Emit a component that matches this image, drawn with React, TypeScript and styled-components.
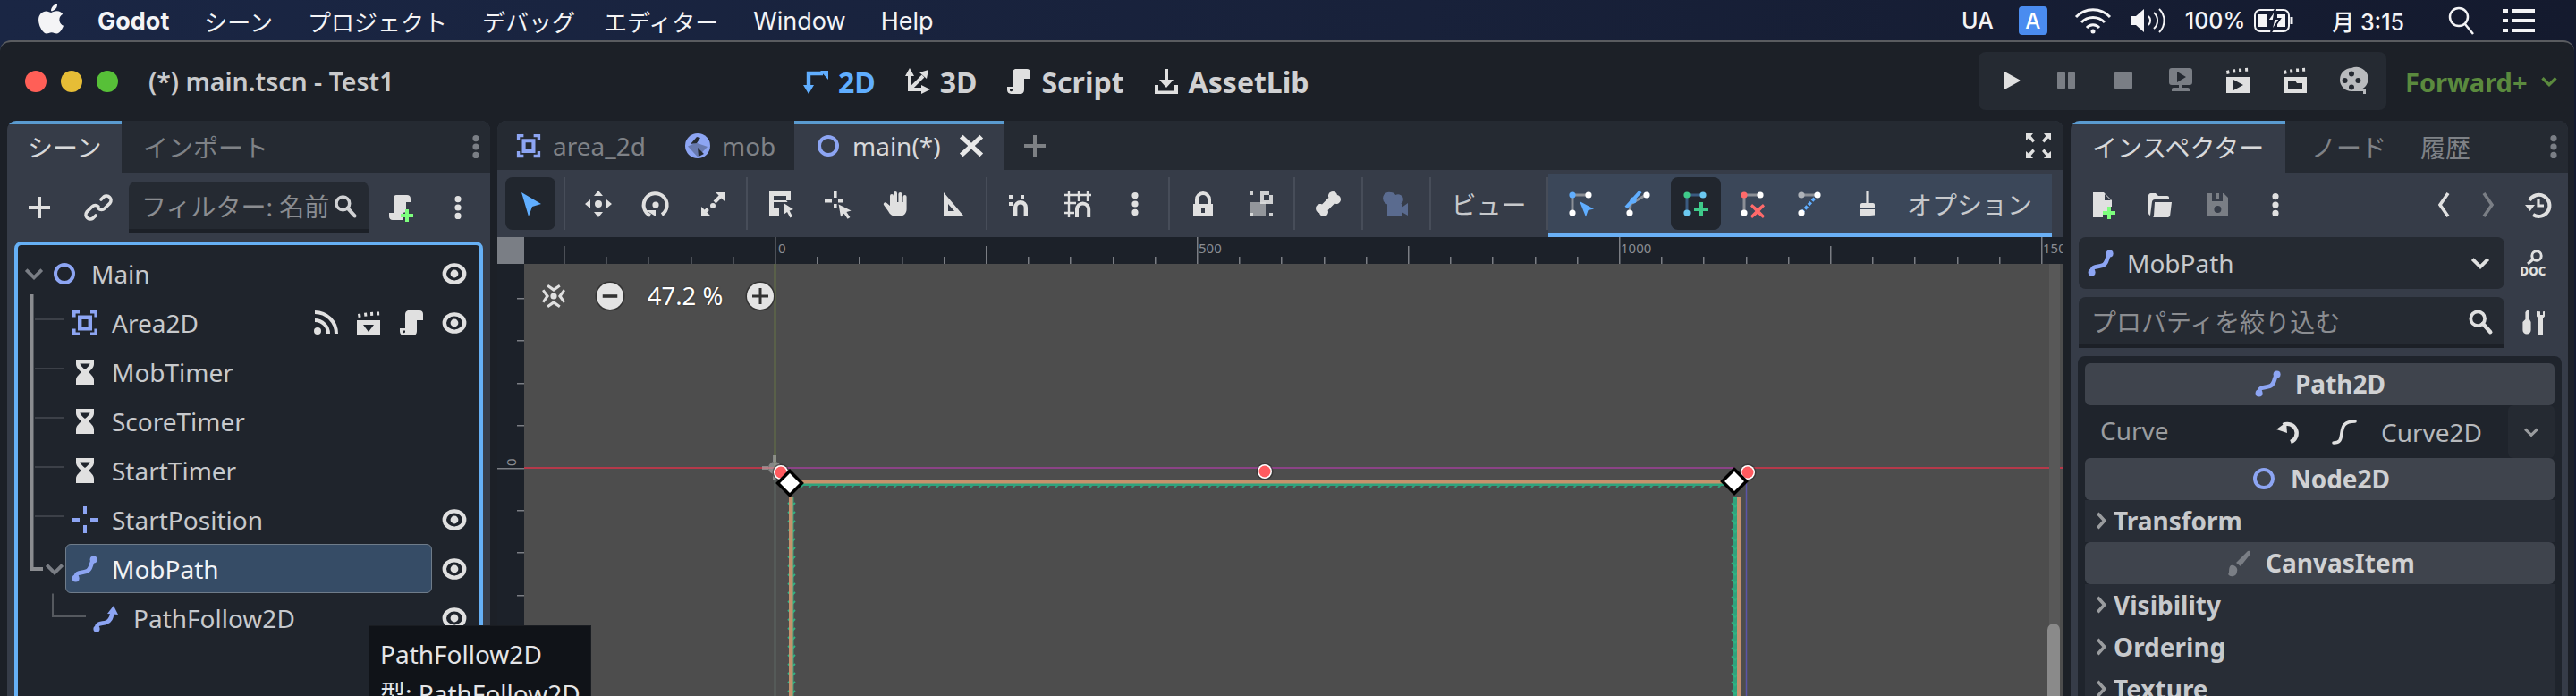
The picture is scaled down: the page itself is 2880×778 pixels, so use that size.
import React from 'react';
import styled, { createGlobalStyle } from 'styled-components';
import { FaApple } from 'react-icons/fa';

const SANS = `"Noto Sans", "Noto Sans CJK JP", sans-serif`;
const MAC = `Inter, "Noto Sans CJK JP", sans-serif`;

const GlobalStyle = createGlobalStyle`
  html, body { margin: 0; padding: 0; background: #151b30; }
  * { box-sizing: border-box; }
`;

const BLUE = '#8da5f3';
const DIM = '#7a7e85';
const GREEN = '#7dff7d';

const icons: Record<string, React.ReactNode> = {
  play: <path d="M5 3.500v9a.5.5 0 0 0 .8.4L14 8.400a.5.5 0 0 0 0-.8L5.800 3.100a.5.500 0 0 0-.8.4z" />,
  pause: <path d="M4 3h2.500a1 1 0 0 1 1 1v8a1 1 0 0 1-1 1H4a1 1 0 0 1-1-1V4a1 1 0 0 1 1-1zm6 0h2a1 1 0 0 1 1 1v8a1 1 0 0 1-1 1h-2a1 1 0 0 1-1-1V4a1 1 0 0 1 1-1z" />,
  stop: <rect x="3" y="3" width="10" height="10" rx="1" />,
  remote: <path d="M3 1h10a1.500 1.500 0 0 1 1.500 1.500V9A1.500 1.500 0 0 1 13 10.500H9v1.500h3a1 1 0 0 1 1 1V14H3v-1a1 1 0 0 1 1-1h3v-1.500H3A1.500 1.500 0 0 1 1.500 9V2.500A1.500 1.500 0 0 1 3 1zm3 2v6l5-3z" />,
  playScene: <path d="M1.500 2.500l1.500-.4.300 2-1.500.4zm3.500-.7l1.500-.2.200 2-1.500.2zm3.500-.5H10l.1 2H8.600zm3.500-.3l1.500-.1.1 2h-1.500zM1.500 6h13v9h-13zm4 1.500v6l5.500-3z" />,
  playCustom: <path d="M1.500 2.500l1.500-.4.300 2-1.500.4zm3.500-.7l1.500-.2.200 2-1.500.2zm3.500-.5H10l.1 2H8.600zm3.500-.3l1.500-.1.1 2h-1.500zM1.500 6h13v9h-13zm2.500 2v5h8V9.500H9L8 8z" />,
  reel: <path d="M7.500 1a6.500 6.500 0 1 0 0 13h6.500v1.500h1.500V13h-2.500a6.500 6.500 0 0 0-5.500-12zm0 1.800a1.500 1.500 0 1 1 0 3 1.500 1.500 0 0 1 0-3zM3.800 6.500a1.500 1.500 0 1 1 0 3 1.500 1.500 0 0 1 0-3zm7.400 0a1.500 1.500 0 1 1 0 3 1.500 1.500 0 0 1 0-3zm-3.700 3.700a1.500 1.500 0 1 1 0 3 1.500 1.500 0 0 1 0-3z" />,
  mode2d: (
    <>
      <path d="M4 11V3.500h8" fill="none" stroke="currentColor" strokeWidth="2.200" />
      <path d="M1 10h6l-3 5zM10.500 2h4.500v5z" />
    </>
  ),
  mode3d: (
    <>
      <path d="M3.500 4v8.500H11M3.500 12.500L11 5" fill="none" stroke="currentColor" strokeWidth="2" />
      <path d="M1 5l2.500-4.500L6 5zM10 10l5 2.500-5 2.500zM9 3l5-1.500-1 5z" />
    </>
  ),
  script: <path d="M6.500 1C5 1 4.500 2.200 4.500 3.500V11H1.500v1.800c0 1.300.9 2.200 2.200 2.200h5.100c1.400 0 2.200-1 2.200-2.400V6.500h3.500V3C14.500 1.800 13.700 1 12.500 1zM3 12.300h1.500v.8a.8.8 0 0 1-1.500 0z" />,
  asset: <path d="M7 1h2v6h3l-4 4.500L4 7h3zM1.500 10h2v3.200h9V10h2v5h-13z" />,
  node: <path d="M8 2a6 6 0 1 0 0 12A6 6 0 0 0 8 2zm0 2a4 4 0 1 1 0 8 4 4 0 0 1 0-8z" />,
  area: <path d="M1 1h4v1.800H2.800V4.800H1zM11 1h4v3.800h-1.800V2.800H11zM1 11.200h1.800v2H5V15H1zM13.200 11.200H15V15h-4v-1.800h2.200zM4 3.800h8v8.400H4zm2.200 2.200v4h3.600V6z" />,
  mob: (
    <>
      <path d="M8 1a7 7 0 1 0 0 14A7 7 0 0 0 8 1z" />
      <path d="M2.500 8.200L7 6.300 13.500 8.500 8 14.300z" fill="#252a32" opacity=".35" />
      <path d="M7.500 3L4 7l3.500-.5 2-3z M8 9l3.500 3.500L8.500 14z" fill="#252a32" />
    </>
  ),
  close: <path d="M3 1.500l5 4.700 5-4.700 2 2L10 8l5 4.500-2 2-5-4.700-5 4.700-2-2L6 8 1 3.500z" />,
  plus: <path d="M7 2h2v5h5v2H9v5H7V9H2V7h5z" />,
  dots: <path d="M8 1.500a1.800 1.800 0 1 1 0 3.600 1.800 1.800 0 0 1 0-3.600zm0 4.700a1.800 1.800 0 1 1 0 3.600 1.800 1.800 0 0 1 0-3.600zm0 4.700a1.800 1.800 0 1 1 0 3.600 1.800 1.800 0 0 1 0-3.600z" />,
  link: <path d="M9.500 3.500L11 2a2.500 2.500 0 0 1 3.500 3.500l-3 3a2.500 2.500 0 0 1-3.500 0M6.500 12.500L5 14a2.500 2.500 0 0 1-3.500-3.500l3-3a2.500 2.500 0 0 1 3.500 0" fill="none" stroke="currentColor" strokeWidth="1.800" strokeLinecap="round" />,
  search: (
    <>
      <circle cx="6.500" cy="6.500" r="4.200" fill="none" stroke="currentColor" strokeWidth="2" />
      <path d="M9.500 9.500L14 14.500" fill="none" stroke="currentColor" strokeWidth="2.400" strokeLinecap="round" />
    </>
  ),
  addScript: (
    <>
      <path d="M5.500 1C4.500 1 4 2 4 3v8H1.500v2c0 1.200.9 2 2 2H9v-4l2-.5V5h2.500V3c0-1.200-.8-2-2-2z" />
      <path d="M10.500 9h2v2.500H15v2h-2.500V16h-2v-2.500H8v-2h2.500z" fill={GREEN} />
    </>
  ),
  eye: (
    <>
      <ellipse cx="8" cy="8" rx="5.600" ry="4.800" fill="none" stroke="currentColor" strokeWidth="2.200" />
      <circle cx="8" cy="8" r="2.200" />
    </>
  ),
  signal: (
    <>
      <circle cx="3.500" cy="12.500" r="2" />
      <path d="M2 6.500a7.500 7.500 0 0 1 7.500 7.500M2 2a12 12 0 0 1 12 12" fill="none" stroke="currentColor" strokeWidth="2" />
    </>
  ),
  group: <path d="M2 3l1.500-.3.300 2-1.500.3zm3.500-.6L7 2.200l.2 2-1.500.2zm3.500-.4l1.500-.1.100 2-1.500.1zm3.500-.2h1.500l.1 2h-1.500zM1.500 6.500h13V15h-13zM5 9l3 4 3-4z" />,
  timer: <path d="M3 1h10v2.500c0 1.800-1.500 3.100-3 4.500 1.500 1.400 3 2.700 3 4.500V15H3v-2.500C3 10.700 4.500 9.400 6 8 4.500 6.600 3 5.300 3 3.500zm2.200 2.200c.3 1 1.500 2.200 2.800 3.300 1.300-1.100 2.500-2.300 2.800-3.300z" />,
  marker: <path d="M7 .5h2V5H7zM7 11h2v4.500H7zM.5 7H5v2H.5zM11 7h4.500v2H11z" />,
  path: (
    <>
      <path d="M2.800 13.200C2.800 9.200 6 10.400 8.700 9.400 11.800 8.300 10.800 5.500 12.700 2.800" fill="none" stroke="currentColor" strokeWidth="2.400" strokeLinecap="round" />
      <circle cx="2.800" cy="13.200" r="2" />
      <circle cx="12.800" cy="2.800" r="2" />
    </>
  ),
  pathFollow: (
    <>
      <path d="M2.500 14C2.500 10.200 5.500 11.300 8 10.300 10.600 9.300 10.800 7 11.400 4.800" fill="none" stroke="currentColor" strokeWidth="2.300" strokeLinecap="round" />
      <circle cx="2.500" cy="14" r="1.800" />
      <path d="M8.500 5.500L12 1l2.500 5z" />
    </>
  ),
  select: <path d="M3 1.500L14 8l-5 1.500L7 15z" />,
  move: <path d="M8 .5L10.500 3.500h-5zM8 15.500l-2.500-3h5zM.5 8l3-2.500v5zM15.500 8l-3-2.500v5zM8 6a2 2 0 1 1 0 4 2 2 0 0 1 0-4z" />,
  rotate: (
    <>
      <path d="M5 14.500A6.500 6.500 0 1 1 11.500 14" fill="none" stroke="currentColor" strokeWidth="2" />
      <path d="M2.500 11.500h5.500V15z" />
      <circle cx="8" cy="8.500" r="1.800" />
    </>
  ),
  scale: <path d="M9.500 1.500h5v5l-1.800-1.800-3 3-1.400-1.400 3-3zM1.500 9.500l1.800 1.800 1.200-1.200 1.400 1.400-1.200 1.200 1.800 1.800h-5zM8 7.500a1.500 1.500 0 1 1 0 3 1.500 1.500 0 0 1 0-3z" />,
  listSelect: <path d="M1.500 1h12v5H11V3.500H4V6h7l.8 1H4v3h3v5H1.500zm8 6.500L15 11l-2.200.7L14.500 15l-1.300.7-1.700-3.200L9.500 14z" />,
  pivot: <path d="M5.500.5h1.800v4H5.500zM.5 5.500h4v1.800h-4zM8 5.500h2.500v1.800H8zM5.500 8h1.800v2.500H5.500zm2.800.2l7 3.500-2.600.8 2 3-1.400.9-2-3-1.800 1.800z" />,
  pan: <path d="M8 1a1 1 0 0 1 1 1v5h.7V2.500a1 1 0 0 1 2 0V7h.6V4a1 1 0 0 1 2 0v7c0 2.500-2 4-4.300 4H8.500C6.500 15 5 14 4 12L1.500 8.500c-.5-1 .8-2 1.700-1L5 9V3.500a1 1 0 0 1 2 0V2a1 1 0 0 1 1-1z" />,
  ruler: <path d="M3 1.500L14 14.500H3zM5.500 8v4h3.500z" />,
  snap: <path d="M1.500 3h2v2h-2zM1.500 7h2v2h-2zM8 3h2v2H8zM4 15V10a4 4 0 0 1 8 0v5h-2.200V10a1.800 1.800 0 0 0-3.600 0v5z" />,
  grid: (
    <>
      <path d="M3 .5v15M8.500 .5v6M13.500 .5v6M.5 3h15M.5 7.500h6.500M.5 13h5.500" fill="none" stroke="currentColor" strokeWidth="1.200" />
      <path d="M7.500 15.500V11a3.300 3.300 0 0 1 6.600 0v4.500" fill="none" stroke="currentColor" strokeWidth="2" />
    </>
  ),
  lock: <path d="M8 1a4.500 4.500 0 0 0-4.500 4.500V8H2.500v7h11V8h-1V5.500A4.500 4.500 0 0 0 8 1zm0 2a2.500 2.500 0 0 1 2.500 2.500V8h-5V5.500A2.500 2.500 0 0 1 8 3zM7 10h2v3H7z" />,
  groupSel: (
    <>
      <path d="M2 1h2v2H2zM13 1h2v2h-2zM2 13h2v2H2zM13 13h2v2h-2zM8 1h7v7H8v-1zm2 2v3h3V3z" opacity=".9" />
      <path d="M2 7h9v8H2z" opacity=".55" />
    </>
  ),
  bone: <path d="M10.500 1c1.500 0 2.300 1 2.500 2 1 .2 2 1 2 2.500 0 1.800-1.900 3-3.500 2.300L7.800 11.500c.7 1.600-.5 3.500-2.300 3.500-1.500 0-2.300-1-2.500-2-1-.2-2-1-2-2.500 0-1.800 1.900-3 3.500-2.300L8.200 4.500C7.500 2.900 8.700 1 10.500 1z" />,
  camera: <path d="M5 1.500a3 3 0 0 1 2.600 1.500A2.800 2.800 0 1 1 10.500 8H11v2l3.500-2.500v7L11 12.500V15H3V8.200A3.300 3.300 0 0 1 5 1.500z" />,
  pathSelect: (
    <>
      <path d="M3 3h9M3 3v10" fill="none" stroke="#8b8f96" strokeWidth="1.500" />
      <circle cx="3" cy="3" r="1.800" fill="#60aeff" />
      <circle cx="12" cy="3" r="1.800" fill="#fff" />
      <circle cx="3" cy="13" r="1.800" fill="#fff" />
      <path d="M7 6.500l8 4.300-3.200.7-1.300 3.800z" fill="#60aeff" />
    </>
  ),
  pathCurve: (
    <>
      <path d="M3 13L3.500 8 12 3" fill="none" stroke="#8b8f96" strokeWidth="1.500" />
      <path d="M1 10L9 1" fill="none" stroke="#60aeff" strokeWidth="2" />
      <circle cx="5" cy="6" r="1.800" fill="#60aeff" />
      <circle cx="12.500" cy="3" r="1.800" fill="#fff" />
      <circle cx="3" cy="13" r="1.800" fill="#fff" />
    </>
  ),
  pathAdd: (
    <>
      <path d="M3 3h9M3 3v10" fill="none" stroke="#3a5a80" strokeWidth="1.500" />
      <circle cx="3" cy="3" r="1.800" fill="#3fca8a" />
      <circle cx="12" cy="3" r="1.800" fill="#6bc8f0" />
      <circle cx="3" cy="13" r="1.800" fill="#6bc8f0" />
      <path d="M10 7h2v3h3v2h-3v3h-2v-3H7v-2h3z" fill="#3fca8a" />
    </>
  ),
  pathDelete: (
    <>
      <path d="M3 3h9M3 3v10" fill="none" stroke="#8b8f96" strokeWidth="1.500" />
      <circle cx="3" cy="3" r="1.800" fill="#ff6a6a" />
      <circle cx="12" cy="3" r="1.800" fill="#fff" />
      <circle cx="3" cy="13" r="1.800" fill="#fff" />
      <path d="M7.500 8l3 2.500L13.500 8l1 1.200-2.700 2.800 2.700 2.800-1 1.200-3-2.500-3 2.500-1-1.200 2.700-2.800-2.700-2.800z" fill="#ff6a6a" />
    </>
  ),
  pathClose: (
    <>
      <path d="M3 3h9" fill="none" stroke="#8b8f96" strokeWidth="1.500" />
      <path d="M3 13L12 3" fill="none" stroke="#60aeff" strokeWidth="1.800" strokeDasharray="2 1" />
      <circle cx="3" cy="3" r="1.800" fill="#aeb2b8" />
      <circle cx="12" cy="3" r="1.800" fill="#fff" />
      <circle cx="3" cy="13" r="1.800" fill="#fff" />
    </>
  ),
  broom: <path d="M7.200 1h1.600v6.500H11c.6 0 1 .4 1 1V10H4V8.500c0-.6.4-1 1-1h2.200zM4 11h8v3.300L4 15z" />,
  fullscreen: <path d="M1 1h4L3.800 2.500 6 5 4.800 6.200 2.500 3.800 1 5zM15 1v4l-1.500-1.200-2.300 2.400L10 5l2.200-2.500L11 1zM1 15v-4l1.500 1.200 2.300-2.400L6 11l-2.200 2.500L5 15zM15 15h-4l1.200-1.500L10 11l1.200-1.200 2.300 2.400L15 11z" />,
  newFile: (
    <>
      <path d="M2.500 1h6L13 5.500V9h-2.500v2.500H8V15H2.500zM9 2v3.500h3.500z" />
      <path d="M10.500 9h2v2.500H15v2h-2.500V16h-2v-2.500H8v-2h2.500z" fill={GREEN} />
    </>
  ),
  folder: <path d="M2 3c0-.8.500-1.500 1.300-1.500H6L7.500 3h5c.6 0 1 .4 1 1v1H5.500c-.8 0-1.300.5-1.500 1.200L3 14c-.6-.2-1-.8-1-1.500zM5.500 6.500H15l-.9 7.300c-.1.700-.6 1.200-1.300 1.200H4.500c.3-.2.500-.6.500-1z" />,
  save: <path d="M2.500 1.500h9L14 4v10.500H2.500zM5 1.500V6h6V1.500H9V5H7.500V1.500zM8.200 8.500a2 2 0 1 0 0 4 2 2 0 0 0 0-4z" />,
  back: <path d="M10 1.500L5.500 8l4.500 6.500" fill="none" stroke="currentColor" strokeWidth="1.800" />,
  forward: <path d="M6 1.500L10.500 8 6 14.500" fill="none" stroke="currentColor" strokeWidth="1.800" />,
  history: (
    <>
      <path d="M3.500 5.500A6 6 0 1 1 5.500 13.500" fill="none" stroke="currentColor" strokeWidth="2" />
      <path d="M1 8h5.500l-2.700 3.500z" />
      <path d="M8.500 4.500V8.500h3" fill="none" stroke="currentColor" strokeWidth="1.600" />
    </>
  ),
  chevron: <path d="M3 5.500l5 5 5-5" fill="none" stroke="currentColor" strokeWidth="2.200" />,
  arrowRight: <path d="M5.500 2.500l5 5.500-5 5.500" fill="none" stroke="currentColor" strokeWidth="2.400" />,
  tools: (
    <>
      <path d="M4 1h1.500v5l.8 1.500V12a2.300 2.300 0 0 1-4.600 0V7.500L3.200 6V2z" />
      <path d="M9.500 1.500v2.800l1 1.200v9.500H13V5.500l1-1.200V1.500l-1 .1V3.500h-1.500V1.600z" />
    </>
  ),
  revert: (
    <>
      <path d="M4.800 4A5.200 5.200 0 1 1 9 13.500" fill="none" stroke="currentColor" strokeWidth="2.200" />
      <path d="M1 6.500L6.500 2.500 7 8.500z" />
    </>
  ),
  curve: <path d="M2 14c3.500 0 4-1.500 4.500-5.500S8 2 14 2" fill="none" stroke="currentColor" strokeWidth="1.800" strokeLinecap="round" />,
  brush: <path d="M14 1.500c.7.500.7 1.300.2 2L9 10 6.500 8l6-6c.5-.6 1-.9 1.500-.5zM3.500 9.500a2.800 2.800 0 0 1 3.500 3.500A2.800 2.800 0 0 1 2 14.500c1-.8 0-3.500 1.500-5z" />,
  centerView: <path d="M8 6.200a1.800 1.800 0 1 1 0 3.600 1.800 1.800 0 0 1 0-3.600zM5 1.500l3 2 3-2 .8 1.200L8 5.500 4.200 2.700zM5 14.500l3-2 3 2 .8-1.200L8 10.500l-3.800 2.800zM1.500 5l2 3-2 3 1.200.8L5.500 8 2.700 4.200zM14.500 5l-2 3 2 3-1.200.8L10.500 8l2.800-3.800z" />,
  minus: <path d="M2.500 6.800h11v2.400h-11z" />,
};

const IconSvg = styled.svg<{ $s: number; $c: string }>`
  width: ${p => p.$s}px;
  height: ${p => p.$s}px;
  flex: none;
  display: block;
  color: ${p => p.$c};
  fill: currentColor;
  fill-rule: evenodd;
  overflow: visible;
`;

const Ic = ({ n, s = 32, c = '#e0e0e0' }: { n: string; s?: number; c?: string }) => (
  <IconSvg viewBox="0 0 16 16" $s={s} $c={c}>
    {icons[n]}
  </IconSvg>
);

const Page = styled.div`
  width: 2880px;
  height: 778px;
  overflow: hidden;
  display: flex;
  flex-direction: column;
  background: linear-gradient(90deg, #1a2644 0%, #18213a 55%, #141a2e 100%);
  position: relative;
`;

/* mac menu bar */
const MenuBar = styled.div`
  height: 45px;
  flex: none;
  display: flex;
  align-items: center;
  padding: 1px 46px 0 38px;
  font: 400 26px ${MAC};
  color: #f4f4f6;
  white-space: nowrap;
`;

const AppleSlot = styled.div`
  font-size: 38px;
  line-height: 0;
  margin-right: 33px;
  margin-top: -5px;
`;

const MenuItem = styled.span<{ $bold?: boolean; $latin?: boolean; $mr?: number }>`
  margin-right: ${p => p.$mr ?? 39}px;
  font-weight: ${p => (p.$bold ? 700 : 400)};
  font-size: ${p => (p.$bold || p.$latin ? 27 : 26)}px;
`;

const StatusArea = styled.div`
  margin-left: auto;
  display: flex;
  align-items: center;
  font-size: 25px;
  font-weight: 500;
`;

const StatusItem = styled.span<{ $gap: number }>`
  margin-left: ${p => p.$gap}px;
  display: flex;
  align-items: center;
`;

const InputBadge = styled.span`
  width: 32px;
  height: 32px;
  margin-left: 28px;
  border-radius: 4px;
  background: #4a8cf0;
  color: #fff;
  display: flex;
  align-items: center;
  justify-content: center;
  font-size: 24px;
`;

/* editor window */
const EditorWindow = styled.div`
  flex: 1;
  width: 2878px;
  min-height: 0;
  display: flex;
  flex-direction: column;
  background: #1c2027;
  border-top: 2px solid #5a5c60;
  border-radius: 12px 12px 0 0;
  font-family: ${SANS};
  font-size: 28px;
  color: #d8d9db;
`;

const TitleBar = styled.div`
  height: 88px;
  flex: none;
  display: flex;
  align-items: center;
`;

const TitleLeft = styled.div`
  width: 896px;
  flex: none;
  display: flex;
  align-items: center;
  padding-left: 28px;
  gap: 16px;
`;

const Light = styled.span<{ $c: string }>`
  width: 24px;
  height: 24px;
  border-radius: 50%;
  background: ${p => p.$c};
`;

const WindowTitle = styled.span`
  margin-left: 18px;
  font-weight: 600;
  font-size: 28.500px;
  color: #c9cacc;
`;

const ModeTabs = styled.div`
  width: 1316px;
  flex: none;
  display: flex;
  align-items: center;
  gap: 31px;
`;

const ModeTab = styled.span<{ $on?: boolean }>`
  display: flex;
  align-items: center;
  gap: 9px;
  font-weight: 700;
  font-size: 32px;
  color: ${p => (p.$on ? '#60aeff' : '#d0d1d3')};
`;

const RunBar = styled.div`
  width: 456px;
  height: 65px;
  flex: none;
  display: flex;
  align-items: center;
  padding-left: 18px;
  gap: 32px;
  background: #252a32;
  border-radius: 8px;
  margin-top: -2px;
`;

const Renderer = styled.div`
  display: flex;
  align-items: center;
  gap: 12px;
  margin-left: 21px;
  font-weight: 700;
  font-size: 29px;
  color: #5b8a3e;
`;

const Body = styled.div`
  flex: 1;
  min-height: 0;
  display: flex;
  padding-left: 8px;
  gap: 8px;
  overflow: hidden;
`;

const Panel = styled.div<{ $w: number }>`
  width: ${p => p.$w}px;
  flex: none;
  display: flex;
  flex-direction: column;
  background: #363c48;
  border-radius: 10px 10px 0 0;
  overflow: hidden;
`;

const TabRow = styled.div<{ $h: number }>`
  height: ${p => p.$h}px;
  flex: none;
  display: flex;
  align-items: stretch;
  background: #252a32;
`;

const Tab = styled.div<{ $on?: boolean; $w: number; $pad: number; $gap?: number }>`
  width: ${p => p.$w}px;
  flex: none;
  display: flex;
  align-items: center;
  gap: ${p => p.$gap ?? 11}px;
  padding-left: ${p => p.$pad}px;
  padding-bottom: 4px;
  background: ${p => (p.$on ? '#363c48' : 'transparent')};
  border-top: 4px solid ${p => (p.$on ? '#5a9bd0' : 'transparent')};
  color: ${p => (p.$on ? '#d8d9db' : '#7f8287')};
`;

const TabDots = styled.div`
  margin-left: auto;
  align-self: center;
`;

/* scene dock */
const DockBar = styled.div`
  height: 77px;
  flex: none;
  display: flex;
  align-items: center;
  padding-left: 20px;
`;

const DockBtn = styled.div<{ $ml?: number }>`
  margin-left: ${p => p.$ml ?? 0}px;
  flex: none;
`;

const FilterBox = styled.div<{ $w: number }>`
  width: ${p => p.$w}px;
  height: 57px;
  flex: none;
  display: flex;
  align-items: center;
  justify-content: space-between;
  padding: 0 12px 0 14px;
  background: #252a32;
  border-bottom: 4px solid #1c2027;
  border-radius: 8px 8px 0 0;
  color: #8b8d91;
  white-space: nowrap;
`;

const TreeBox = styled.div`
  flex: 1;
  margin: 0 8px -12px;
  padding-top: 4px;
  background: #1f242c;
  border: 4px solid #66b0f5;
  border-radius: 8px 8px 0 0;
  position: relative;
`;

const TreeRow = styled.div<{ $pad: number }>`
  height: 55px;
  display: flex;
  align-items: center;
  padding: 0 12px 0 ${p => p.$pad}px;
  position: relative;
`;

const ArrowSlot = styled.div`
  width: 25px;
  flex: none;
  display: flex;
  justify-content: center;
`;

const NodeLabel = styled.div<{ $sel?: boolean }>`
  height: 55px;
  width: ${p => (p.$sel ? '410px' : 'auto')};
  display: flex;
  align-items: center;
  gap: 14px;
  padding-left: 5px;
  background: ${p => (p.$sel ? '#364c66' : 'transparent')};
  border: 1px solid ${p => (p.$sel ? '#6f7c8a' : 'transparent')};
  border-radius: 6px;
  color: ${p => (p.$sel ? '#f2f3f5' : '#c7c9cc')};
`;

const RowIcons = styled.div`
  margin-left: auto;
  display: flex;
  gap: 16px;
`;

const TreeGuide = styled.svg`
  position: absolute;
  left: 0;
  top: 0;
  width: 100%;
  height: 100%;
  pointer-events: none;
`;

const Tooltip = styled.div`
  position: absolute;
  left: 412px;
  top: 699px;
  width: 249px;
  height: 100px;
  padding: 9px 12px;
  background: #101318;
  border: 1px solid #1a1d22;
  color: #e4e5e7;
  font: 400 28px/44px ${SANS};
  white-space: nowrap;
  z-index: 5;
`;

/* 2D editor */
const FileAdd = styled.div`
  margin-left: 18px;
  align-self: center;
`;

const Fullscreen = styled.div`
  margin-left: auto;
  margin-right: 12px;
  align-self: center;
`;

const Toolbar = styled.div`
  height: 75px;
  flex: none;
  display: flex;
  align-items: center;
  padding-left: 9px;
  background: #363c48;
`;

const ToolGroup = styled.div`
  display: flex;
  gap: 8px;
`;

const ToolBtn = styled.div<{ $on?: boolean }>`
  width: 56px;
  height: 59px;
  display: flex;
  align-items: center;
  justify-content: center;
  border-radius: 8px;
  background: ${p => (p.$on ? '#21262e' : 'transparent')};
`;

const TextTool = styled.div<{ $w: number }>`
  width: ${p => p.$w}px;
  height: 59px;
  display: flex;
  align-items: center;
  justify-content: center;
  color: #c7c9cc;
`;

const Sep = styled.div`
  width: 2px;
  height: 59px;
  margin: 0 9px;
  flex: none;
  background: #474d59;
`;

const PathTools = styled.div`
  align-self: flex-end;
  height: 71px;
  width: 563px;
  margin-left: -9px;
  padding: 0 0 0 9px;
  display: flex;
  align-items: center;
  gap: 8px;
  background: #3b4759;
  border-bottom: 4px solid #6ab0f5;
`;

const RulerRow = styled.div`
  height: 30px;
  flex: none;
  display: flex;
  background: #1c2129;
`;

const RulerCorner = styled.div`
  width: 30px;
  flex: none;
  background: #7a7e85;
`;

const Ruler = styled.svg`
  display: block;
  flex: 1;
  min-width: 0;
`;

const CanvasRow = styled.div`
  flex: 1;
  min-height: 0;
  display: flex;
`;

const SideRuler = styled.svg`
  width: 30px;
  flex: none;
  display: block;
  background: #1c2129;
`;

const Viewport = styled.div`
  flex: 1;
  position: relative;
  background: #4d4d4d;
  overflow: hidden;
`;

const CanvasArt = styled.svg`
  position: absolute;
  left: 0;
  top: 0;
  width: 1721px;
  height: 483px;
`;

const ZoomOverlay = styled.div`
  position: absolute;
  left: 17px;
  top: 17px;
  display: flex;
  align-items: center;
  color: #fff;
  font-size: 27.500px;
  text-shadow: 0 0 2px #222;
`;

const ZoomBtn = styled.div<{ $ml?: number }>`
  width: 30px;
  height: 30px;
  margin-left: ${p => p.$ml ?? 0}px;
  border-radius: 50%;
  background: #e4e4e4;
  box-shadow: 0 0 0 1.500px #333;
  display: flex;
  align-items: center;
  justify-content: center;
`;

const ZoomValue = styled.span`
  width: 138px;
  text-align: center;
`;

const ScrollTrack = styled.div`
  position: absolute;
  right: 4px;
  top: 0;
  bottom: 0;
  width: 12px;
  background: #585858;
`;

const ScrollThumb = styled.div`
  position: absolute;
  right: 4px;
  top: 402px;
  bottom: -20px;
  width: 14px;
  border-radius: 7px;
  background: #8a8a8a;
`;

/* inspector */
const InspectorBar = styled.div`
  height: 72px;
  flex: none;
  display: flex;
  align-items: center;
  padding-left: 20px;
`;

const InspectorRow = styled.div`
  flex: none;
  display: flex;
  align-items: center;
  padding-left: 9px;
  margin-bottom: 9px;
`;

const NodeSelect = styled.div`
  width: 476px;
  height: 58px;
  flex: none;
  display: flex;
  align-items: center;
  padding: 0 9px;
  gap: 13px;
  background: #252a32;
  border-radius: 8px;
  color: #c7c9cc;
`;

const SelectArrow = styled.div`
  margin-left: auto;
  margin-right: 4px;
`;

const SideTool = styled.div`
  margin-left: 17px;
`;

const DocText = styled.text`
  font: 800 6.600px ${SANS};
  fill: currentColor;
`;

const PropList = styled.div`
  flex: 1;
  margin: 0 7px 0 8px;
  padding: 8px 8px 0;
  background: #1f242c;
  border-radius: 8px 8px 0 0;
`;

const Section = styled.div`
  height: 47px;
  display: flex;
  align-items: center;
  justify-content: center;
  gap: 14px;
  padding-bottom: 2px;
  background: #3f444d;
  border-radius: 6px;
  font-weight: 700;
  color: #d0d1d3;
`;

const PropRow = styled.div`
  height: 59px;
  display: flex;
  align-items: center;
  background: #1f242c;
  color: #9a9c9f;
`;

const PropName = styled.span`
  width: 212px;
  padding-left: 17px;
  padding-bottom: 4px;
`;

const PropValue = styled.div`
  flex: 1;
  display: flex;
  align-items: center;
  color: #b7b9bc;
`;

const PropPart = styled.div<{ $ml: number }>`
  margin-left: ${p => p.$ml}px;
`;

const PropMenu = styled.div`
  width: 52px;
  height: 59px;
  display: flex;
  align-items: center;
  justify-content: center;
  background: #252a32;
  border-radius: 6px;
`;

const Group = styled.div`
  height: 47px;
  display: flex;
  align-items: center;
  gap: 2px;
  padding-left: 6px;
  padding-bottom: 2px;
  background: #282d36;
  font-weight: 700;
  color: #c7c9cc;
`;

const toolIcons = (names: string[]) =>
  names.map(n => (
    <ToolBtn key={n} $on={n === 'select' || n === 'pathAdd'}>
      <Ic n={n} c={n === 'select' ? '#60aeff' : n === 'camera' ? '#5a6b8f' : '#e0e0e0'} />
    </ToolBtn>
  ));

const rulerMarks = Array.from({ length: 37 }, (_, i) => i);

const TopRuler = () => (
  <Ruler viewBox="586 265 1721 30">
    {rulerMarks.map(i => {
      const x = Math.round(630 + i * 47.2);
      const major = (i - 5) % 10 === 0;
      const mid = i % 5 === 0;
      const y = major ? 265 : mid ? 275 : 287;
      return <rect key={i} x={x} y={y} width="1.500" height={295 - y} fill="#7b7e84" />;
    })}
    {[
      ['0', 870],
      ['500', 1340],
      ['1000', 1812],
      ['1500', 2284],
    ].map(([t, x]) => (
      <text key={t} x={x} y="283" fontSize="15" fill="#8a8d92" fontFamily="Noto Sans">
        {t}
      </text>
    ))}
  </Ruler>
);

const LeftRuler = () => (
  <SideRuler viewBox="556 295 30 483">
    {Array.from({ length: 10 }, (_, i) => i).map(i => {
      const y = Math.round(333 + i * 47.4);
      const major = i === 4;
      const mid = i === 9;
      const x = major ? 556 : mid ? 566 : 578;
      return <rect key={i} x={x} y={y} width={586 - x} height="1.500" fill="#7b7e84" />;
    })}
    <text x="0" y="0" fontSize="15" fill="#8a8d92" fontFamily="Noto Sans" transform="translate(577 521) rotate(-90)">
      0
    </text>
  </SideRuler>
);

const Handle = ({ x, y }: { x: number; y: number }) => (
  <>
    <circle cx={x} cy={y} r="9.500" fill="#2a2a2a" opacity=".55" />
    <circle cx={x} cy={y} r="8" fill="#fff" />
    <circle cx={x} cy={y} r="6.500" fill="#ff5a5f" />
  </>
);

const Diamond = ({ x, y }: { x: number; y: number }) => (
  <rect x={x - 9.5} y={y - 9.5} width="19" height="19" fill="#fff" stroke="#000" strokeWidth="3.500" transform={`rotate(45 ${x} ${y})`} />
);

const CanvasDrawing = () => (
  <CanvasArt viewBox="586 295 1721 483">
    <defs>
      <pattern id="chevH" x="0" y="535" width="9.500" height="12" patternUnits="userSpaceOnUse">
        <path d="M2 2l4 4-4 4" fill="none" stroke="#2fa37d" strokeWidth="1.800" />
      </pattern>
      <pattern id="chevL" x="879" y="0" width="12" height="10" patternUnits="userSpaceOnUse">
        <path d="M2 2l4 4 4-4" fill="none" stroke="#2fb383" strokeWidth="1.800" />
      </pattern>
      <pattern id="chevR" x="1934" y="0" width="12" height="9.500" patternUnits="userSpaceOnUse">
        <path d="M2 2l4 4 4-4" fill="none" stroke="#2fb383" strokeWidth="1.800" />
      </pattern>
    </defs>
    <path d="M586 523H866" stroke="#d8334a" strokeWidth="1.500" />
    <path d="M1960 523H2307" stroke="#d8334a" strokeWidth="1.500" />
    <path d="M866 523H1940" stroke="#a0409a" strokeWidth="1.500" />
    <path d="M866.500 295V523" stroke="#7c9a3c" strokeWidth="1.500" />
    <path d="M866.500 523V778" stroke="#6d8078" strokeWidth="1.500" />
    <path d="M1952.500 535V778" stroke="#5a55a8" strokeWidth="1.500" />
    <g opacity=".55" fill="#b8b8b8">
      <circle cx="866" cy="523" r="7" />
      <rect x="864" y="509" width="4" height="7" />
      <rect x="852" y="521" width="7" height="4" />
      <rect x="864" y="530" width="4" height="7" />
    </g>
    <rect x="885" y="540" width="1055" height="3" fill="#2fa37d" />
    <rect x="885" y="535" width="1055" height="12" fill="url(#chevH)" />
    <rect x="885" y="536" width="1055" height="4.500" fill="#c6926c" />
    <rect x="886" y="555" width="1.500" height="223" fill="#2fa37d" />
    <rect x="879" y="555" width="12" height="223" fill="url(#chevL)" />
    <rect x="882" y="555" width="4.500" height="223" fill="#c6926c" />
    <rect x="1938" y="555" width="4" height="223" fill="#2fa37d" />
    <rect x="1934" y="555" width="12" height="223" fill="url(#chevR)" />
    <rect x="1942" y="555" width="4" height="223" fill="#c6926c" />
    <Handle x={873} y={528} />
    <Handle x={1954} y={528} />
    <Handle x={1414} y={527} />
    <Diamond x={883} y={540} />
    <Diamond x={1939} y={538} />
  </CanvasArt>
);

const Speaker = () => (
  <svg width="42" height="32" viewBox="0 0 42 32" fill="none" stroke="#f4f4f6" strokeWidth="2">
    <path d="M1 11h6l9-8v26l-9-8H1z" fill="#f4f4f6" stroke="none" />
    <path d="M21 11a7 7 0 0 1 0 10M27 7a12 12 0 0 1 0 18M33 3a18 18 0 0 1 0 26" />
  </svg>
);

const Wifi = () => (
  <svg width="42" height="32" viewBox="0 0 42 32" fill="none" stroke="#f4f4f6" strokeWidth="3">
    <path d="M2 12a26 26 0 0 1 38 0M8 18a18 18 0 0 1 26 0M14 24a9 9 0 0 1 14 0" />
    <circle cx="21" cy="28" r="2.500" fill="#f4f4f6" stroke="none" />
  </svg>
);

const Battery = () => (
  <svg width="45" height="28" viewBox="0 0 45 28" fill="none" stroke="#f4f4f6" strokeWidth="2">
    <rect x="1" y="2" width="38" height="24" rx="6" />
    <path d="M42 10v8" strokeWidth="3" />
    <path d="M5 7h9v14H5zM26 7h9v14h-9z" fill="#f4f4f6" stroke="none" />
    <path d="M24 1l-9 13h7l-3 13 10-15h-7z" fill="#f4f4f6" stroke="#151b30" strokeWidth="2" />
  </svg>
);

const ControlCenter = () => (
  <svg width="36" height="26" viewBox="0 0 36 26" fill="#f4f4f6">
    <path d="M0 0h6v4H0zM10 0h26v4H10zM0 11h6v4H0zM10 11h26v4H10zM0 22h6v4H0zM10 22h26v4H10z" />
  </svg>
);

const MacSearch = () => (
  <svg width="30" height="34" viewBox="0 0 30 34" fill="none" stroke="#f4f4f6" strokeWidth="2.500">
    <circle cx="12" cy="13" r="10" />
    <path d="M19 21l9 11" />
  </svg>
);

const DocIcon = () => (
  <IconSvg viewBox="0 0 16 16" $s={32} $c="#e0e0e0">
    <circle cx="9.500" cy="4" r="2.600" fill="none" stroke="currentColor" strokeWidth="1.500" />
    <path d="M7.500 6L4.500 8.500" stroke="currentColor" strokeWidth="1.500" />
    <DocText x="0.300" y="15">DOC</DocText>
  </IconSvg>
);

const App: React.FC = () => {
  return (
    <Page>
      <GlobalStyle />
      <MenuBar>
        <AppleSlot>
          <FaApple />
        </AppleSlot>
        <MenuItem $bold>Godot</MenuItem>
        <MenuItem>シーン</MenuItem>
        <MenuItem>プロジェクト</MenuItem>
        <MenuItem $mr={32}>デバッグ</MenuItem>
        <MenuItem>エディター</MenuItem>
        <MenuItem $latin>Window</MenuItem>
        <MenuItem $latin>Help</MenuItem>
        <StatusArea>
          <span>UA</span>
          <InputBadge>A</InputBadge>
          <StatusItem $gap={30}>
            <Wifi />
          </StatusItem>
          <StatusItem $gap={20}>
            <Speaker />
          </StatusItem>
          <StatusItem $gap={20}>100%</StatusItem>
          <StatusItem $gap={10}>
            <Battery />
          </StatusItem>
          <StatusItem $gap={42}>月 3:15</StatusItem>
          <StatusItem $gap={49}>
            <MacSearch />
          </StatusItem>
          <StatusItem $gap={31}>
            <ControlCenter />
          </StatusItem>
        </StatusArea>
      </MenuBar>

      <EditorWindow>
        <TitleBar>
          <TitleLeft>
            <Light $c="#ff5f57" />
            <Light $c="#e6bd36" />
            <Light $c="#57c038" />
            <WindowTitle>(*) main.tscn - Test1</WindowTitle>
          </TitleLeft>
          <ModeTabs>
            <ModeTab $on>
              <Ic n="mode2d" c="#60aeff" />
              2D
            </ModeTab>
            <ModeTab>
              <Ic n="mode3d" />
              3D
            </ModeTab>
            <ModeTab>
              <Ic n="script" />
              Script
            </ModeTab>
            <ModeTab>
              <Ic n="asset" />
              AssetLib
            </ModeTab>
          </ModeTabs>
          <RunBar>
            <Ic n="play" />
            <Ic n="pause" c={DIM} />
            <Ic n="stop" c={DIM} />
            <Ic n="remote" c={DIM} />
            <Ic n="playScene" />
            <Ic n="playCustom" />
            <Ic n="reel" c="#b9bbbe" />
          </RunBar>
          <Renderer>
            Forward+
            <Ic n="chevron" c="#5b8a3e" s={24} />
          </Renderer>
        </TitleBar>

        <Body>
          <Panel $w={540}>
            <TabRow $h={58}>
              <Tab $on $w={128} $pad={23}>
                シーン
              </Tab>
              <Tab $w={200} $pad={24}>
                インポート
              </Tab>
              <TabDots>
                <Ic n="dots" c={DIM} />
              </TabDots>
            </TabRow>
            <DockBar>
              <DockBtn>
                <Ic n="plus" />
              </DockBtn>
              <DockBtn $ml={34}>
                <Ic n="link" />
              </DockBtn>
              <DockBtn $ml={18}>
                <FilterBox $w={268}>
                  フィルター: 名前
                  <Ic n="search" s={28} c="#d0d1d3" />
                </FilterBox>
              </DockBtn>
              <DockBtn $ml={20}>
                <Ic n="addScript" />
              </DockBtn>
              <DockBtn $ml={32}>
                <Ic n="dots" />
              </DockBtn>
            </DockBar>
            <TreeBox>
              <TreeGuide>
                <rect x="14" y="55" width="3.500" height="309" fill="#8a8c90" />
                <rect x="14" y="360" width="14" height="4" fill="#8a8c90" />
                {[82, 137, 192, 247, 302].map(y => (
                  <rect key={y} x="19" y={y} width="33" height="2" fill="#3c4048" />
                ))}
                <path d="M39 389.500V415H76" fill="none" stroke="#55595f" strokeWidth="2" />
              </TreeGuide>
              <TreeRow $pad={5}>
                <ArrowSlot>
                  <Ic n="chevron" s={28} c={DIM} />
                </ArrowSlot>
                <NodeLabel>
                  <Ic n="node" c={BLUE} />
                  Main
                </NodeLabel>
                <RowIcons>
                  <Ic n="eye" />
                </RowIcons>
              </TreeRow>
              <TreeRow $pad={53}>
                <NodeLabel>
                  <Ic n="area" c={BLUE} />
                  Area2D
                </NodeLabel>
                <RowIcons>
                  <Ic n="signal" />
                  <Ic n="group" />
                  <Ic n="script" />
                  <Ic n="eye" />
                </RowIcons>
              </TreeRow>
              {['MobTimer', 'ScoreTimer', 'StartTimer'].map(name => (
                <TreeRow key={name} $pad={53}>
                  <NodeLabel>
                    <Ic n="timer" />
                    {name}
                  </NodeLabel>
                </TreeRow>
              ))}
              <TreeRow $pad={53}>
                <NodeLabel>
                  <Ic n="marker" c={BLUE} />
                  StartPosition
                </NodeLabel>
                <RowIcons>
                  <Ic n="eye" />
                </RowIcons>
              </TreeRow>
              <TreeRow $pad={28}>
                <ArrowSlot>
                  <Ic n="chevron" s={28} c={DIM} />
                </ArrowSlot>
                <NodeLabel $sel>
                  <Ic n="path" c={BLUE} />
                  MobPath
                </NodeLabel>
                <RowIcons>
                  <Ic n="eye" />
                </RowIcons>
              </TreeRow>
              <TreeRow $pad={77}>
                <NodeLabel>
                  <Ic n="pathFollow" c={BLUE} />
                  PathFollow2D
                </NodeLabel>
                <RowIcons>
                  <Ic n="eye" />
                </RowIcons>
              </TreeRow>
            </TreeBox>
          </Panel>

          <Panel $w={1751}>
            <TabRow $h={55}>
              <Tab $w={208} $pad={20} $gap={12}>
                <Ic n="area" c={BLUE} s={30} />
                area_2d
              </Tab>
              <Tab $w={124} $pad={0}>
                <Ic n="mob" c={BLUE} />
                mob
              </Tab>
              <Tab $on $w={235} $pad={22}>
                <Ic n="node" c={BLUE} />
                main(*)
                <DockBtn $ml={8}>
                  <Ic n="close" s={30} c="#e8e8e8" />
                </DockBtn>
              </Tab>
              <FileAdd>
                <Ic n="plus" c="#7d8084" />
              </FileAdd>
              <Fullscreen>
                <Ic n="fullscreen" />
              </Fullscreen>
            </TabRow>
            <Toolbar>
              <ToolGroup>{toolIcons(['select'])}</ToolGroup>
              <Sep />
              <ToolGroup>{toolIcons(['move', 'rotate', 'scale'])}</ToolGroup>
              <Sep />
              <ToolGroup>{toolIcons(['listSelect', 'pivot', 'pan', 'ruler'])}</ToolGroup>
              <Sep />
              <ToolGroup>{toolIcons(['snap', 'grid', 'dots'])}</ToolGroup>
              <Sep />
              <ToolGroup>{toolIcons(['lock', 'groupSel'])}</ToolGroup>
              <Sep />
              <ToolGroup>{toolIcons(['bone'])}</ToolGroup>
              <Sep />
              <ToolGroup>{toolIcons(['camera'])}</ToolGroup>
              <Sep />
              <TextTool $w={111}>ビュー</TextTool>
              <Sep />
              <PathTools>
                {toolIcons(['pathSelect', 'pathCurve', 'pathAdd', 'pathDelete', 'pathClose', 'broom'])}
                <TextTool $w={156}>オプション</TextTool>
              </PathTools>
            </Toolbar>
            <RulerRow>
              <RulerCorner />
              <TopRuler />
            </RulerRow>
            <CanvasRow>
              <LeftRuler />
              <Viewport>
                <CanvasDrawing />
                <ZoomOverlay>
                  <Ic n="centerView" s={32} />
                  <ZoomBtn $ml={32}>
                    <Ic n="minus" s={24} c="#333" />
                  </ZoomBtn>
                  <ZoomValue>47.2 %</ZoomValue>
                  <ZoomBtn>
                    <Ic n="plus" s={24} c="#333" />
                  </ZoomBtn>
                </ZoomOverlay>
                <ScrollTrack />
                <ScrollThumb />
              </Viewport>
            </CanvasRow>
          </Panel>

          <Panel $w={556}>
            <TabRow $h={58}>
              <Tab $on $w={240} $pad={24}>
                インスペクター
              </Tab>
              <Tab $w={122} $pad={29}>
                ノード
              </Tab>
              <Tab $w={100} $pad={29}>
                履歴
              </Tab>
              <TabDots>
                <Ic n="dots" c={DIM} />
              </TabDots>
            </TabRow>
            <InspectorBar>
              <Ic n="newFile" />
              <DockBtn $ml={31}>
                <Ic n="folder" />
              </DockBtn>
              <DockBtn $ml={33}>
                <Ic n="save" c={DIM} />
              </DockBtn>
              <DockBtn $ml={33}>
                <Ic n="dots" />
              </DockBtn>
              <DockBtn $ml={157}>
                <Ic n="back" />
              </DockBtn>
              <DockBtn $ml={16}>
                <Ic n="forward" c={DIM} />
              </DockBtn>
              <DockBtn $ml={24}>
                <Ic n="history" />
              </DockBtn>
            </InspectorBar>
            <InspectorRow>
              <NodeSelect>
                <Ic n="path" c={BLUE} />
                MobPath
                <SelectArrow>
                  <Ic n="chevron" s={28} />
                </SelectArrow>
              </NodeSelect>
              <SideTool>
                <DocIcon />
              </SideTool>
            </InspectorRow>
            <InspectorRow>
              <FilterBox $w={476}>
                プロパティを絞り込む
                <Ic n="search" s={30} />
              </FilterBox>
              <SideTool>
                <Ic n="tools" />
              </SideTool>
            </InspectorRow>
            <PropList>
              <Section>
                <Ic n="path" c={BLUE} />
                Path2D
              </Section>
              <PropRow>
                <PropName>Curve</PropName>
                <PropValue>
                  <Ic n="revert" />
                  <PropPart $ml={30}>
                    <Ic n="curve" />
                  </PropPart>
                  <PropPart $ml={25}>Curve2D</PropPart>
                </PropValue>
                <PropMenu>
                  <Ic n="chevron" s={22} c="#9a9c9f" />
                </PropMenu>
              </PropRow>
              <Section>
                <Ic n="node" c={BLUE} />
                Node2D
              </Section>
              <Group>
                <Ic n="arrowRight" s={24} c="#9a9c9f" />
                Transform
              </Group>
              <Section>
                <Ic n="brush" c={DIM} />
                CanvasItem
              </Section>
              <Group>
                <Ic n="arrowRight" s={24} c="#9a9c9f" />
                Visibility
              </Group>
              <Group>
                <Ic n="arrowRight" s={24} c="#9a9c9f" />
                Ordering
              </Group>
              <Group>
                <Ic n="arrowRight" s={24} c="#9a9c9f" />
                Texture
              </Group>
            </PropList>
          </Panel>
        </Body>
      </EditorWindow>
      <Tooltip>
        PathFollow2D
        <br />
        型: PathFollow2D
      </Tooltip>
    </Page>
  );
};

export default App;
